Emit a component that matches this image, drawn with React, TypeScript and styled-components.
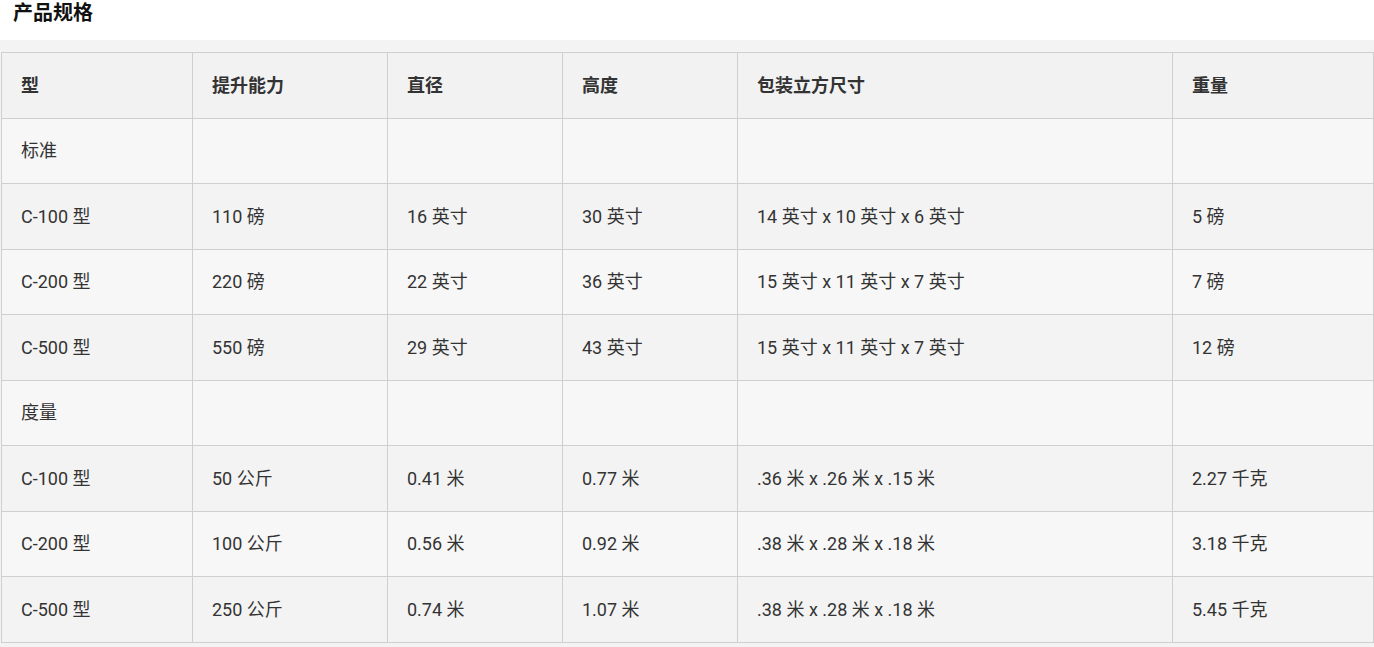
import React from "react";
import styled, { createGlobalStyle } from "styled-components";

const Global = createGlobalStyle`
  html, body { margin: 0; padding: 0; background: #ffffff; }
  body { font-family: Roboto, "Noto Sans CJK SC", sans-serif; color: #333333; }
`;

const Page = styled.div`
  width: 1374px;
  display: flex;
  flex-direction: column;
`;

const Title = styled.h2`
  margin: 0;
  padding: 1px 0 0 13px;
  height: 39px;
  line-height: 22px;
  font-size: 20px;
  font-weight: 700;
  color: #111111;
  font-family: "Noto Sans CJK SC", sans-serif;
`;

const Band = styled.div`
  background: #f3f3f3;
  padding: 12px 0 5px 1px;
`;

const Table = styled.table`
  border-collapse: collapse;
  table-layout: fixed;
  width: 1372px;
  font-size: 18px;
`;

const Row = styled.tr<{ $shade: "head" | "light" | "dark" }>`
  height: 65.5px;
  background: ${(p) =>
    p.$shade === "head" ? "#f2f2f2" : p.$shade === "light" ? "#f7f7f7" : "#f3f3f3"};
`;

const Th = styled.th`
  border: 1px solid #cfcfcf;
  padding: 0 19px 3px;
  text-align: left;
  vertical-align: middle;
  font-weight: 700;
  color: #333333;
  font-family: Roboto, "Noto Sans CJK SC", sans-serif;
`;

const Td = styled.td`
  border: 1px solid #cfcfcf;
  padding: 0 19px 3px;
  text-align: left;
  vertical-align: middle;
  color: #333333;
  white-space: nowrap;
`;

const widths = [191, 195, 175, 175, 435, 201];
const headers = ["型", "提升能力", "直径", "高度", "包装立方尺寸", "重量"];

const rows: string[][] = [
  ["标准", "", "", "", "", ""],
  ["C-100 型", "110 磅", "16 英寸", "30 英寸", "14 英寸 x 10 英寸 x 6 英寸", "5 磅"],
  ["C-200 型", "220 磅", "22 英寸", "36 英寸", "15 英寸 x 11 英寸 x 7 英寸", "7 磅"],
  ["C-500 型", "550 磅", "29 英寸", "43 英寸", "15 英寸 x 11 英寸 x 7 英寸", "12 磅"],
  ["度量", "", "", "", "", ""],
  ["C-100 型", "50 公斤", "0.41 米", "0.77 米", ".36 米 x .26 米 x .15 米", "2.27 千克"],
  ["C-200 型", "100 公斤", "0.56 米", "0.92 米", ".38 米 x .28 米 x .18 米", "3.18 千克"],
  ["C-500 型", "250 公斤", "0.74 米", "1.07 米", ".38 米 x .28 米 x .18 米", "5.45 千克"],
];

export default function App() {
  return (
    <Page>
      <Global />
      <Title>产品规格</Title>
      <Band>
        <Table>
          <colgroup>
            {widths.map((w, i) => (
              <col key={i} style={{ width: w }} />
            ))}
          </colgroup>
          <thead>
            <Row $shade="head">
              {headers.map((h) => (
                <Th key={h}>{h}</Th>
              ))}
            </Row>
          </thead>
          <tbody>
            {rows.map((r, i) => (
              <Row key={i} $shade={i % 2 === 0 ? "light" : "dark"}>
                {r.map((c, j) => (
                  <Td key={j}>{c}</Td>
                ))}
              </Row>
            ))}
          </tbody>
        </Table>
      </Band>
    </Page>
  );
}
